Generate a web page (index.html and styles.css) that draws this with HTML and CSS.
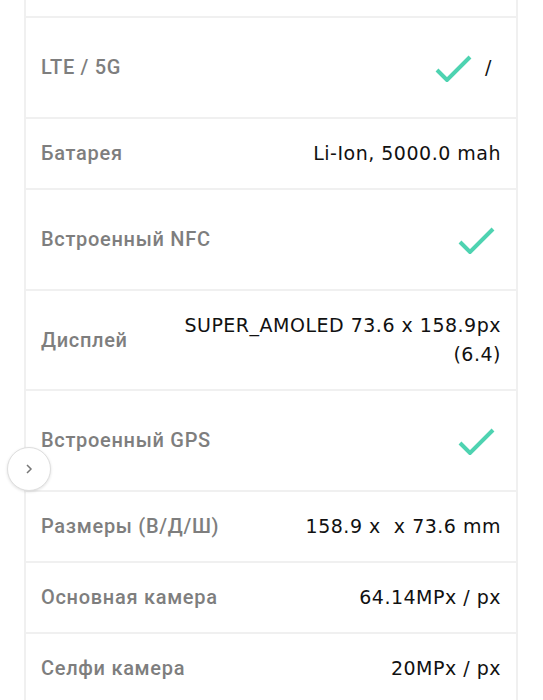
FILE: index.html
```html
<!DOCTYPE html>
<html lang="ru">

<head>
    <meta charset="UTF-8">
    <meta name="viewport" content="width=device-width, initial-scale=1.0">
    <title>Характеристики</title>
    <link rel="stylesheet" href="styles.css">
</head>

<body>

    <div class="specs">
        <div class="spec-row spec-row-cut"></div>

        <div class="spec-row spec-row-tall">
            <div class="spec-label">LTE / 5G</div>
            <div class="spec-value">
                <svg class="check" width="38" height="28" viewBox="0 0 38 28">
                    <path d="M3 16 L13 26 L36 3" />
                </svg>
                <span class="slash">/</span>
            </div>
        </div>

        <div class="spec-row">
            <div class="spec-label">Батарея</div>
            <div class="spec-value">Li-Ion, 5000.0 mah</div>
        </div>

        <div class="spec-row spec-row-tall">
            <div class="spec-label">Встроенный NFC</div>
            <div class="spec-value">
                <svg class="check check-alone" width="38" height="28" viewBox="0 0 38 28">
                    <path d="M3 16 L13 26 L36 3" />
                </svg>
            </div>
        </div>

        <div class="spec-row">
            <div class="spec-label">Дисплей</div>
            <div class="spec-value">SUPER_AMOLED 73.6 x 158.9px (6.4)</div>
        </div>

        <div class="spec-row spec-row-tall">
            <div class="spec-label">Встроенный GPS</div>
            <div class="spec-value">
                <svg class="check check-alone" width="38" height="28" viewBox="0 0 38 28">
                    <path d="M3 16 L13 26 L36 3" />
                </svg>
            </div>
        </div>

        <div class="spec-row">
            <div class="spec-label">Размеры (В/Д/Ш)</div>
            <div class="spec-value">158.9 x &nbsp;x 73.6 mm</div>
        </div>

        <div class="spec-row">
            <div class="spec-label">Основная камера</div>
            <div class="spec-value">64.14MPx / px</div>
        </div>

        <div class="spec-row">
            <div class="spec-label">Селфи камера</div>
            <div class="spec-value">20MPx / px</div>
        </div>

        <button class="side-toggle" type="button">
            <svg width="12" height="12" viewBox="0 0 12 12">
                <path d="M4 2 L8 6 L4 10" />
            </svg>
        </button>
    </div>

</body>

</html>
```

FILE: styles.css
```css
body {
    margin: 0;
    background-color: #fff;
    font-family: Roboto, "Noto Sans", sans-serif;
}

.specs {
    position: relative;
    margin: -53px 0 0 24px;
    width: 490px;
    border-left: 2px solid #f0f0f0;
    border-right: 2px solid #f0f0f0;
}

.spec-row {
    display: flex;
    align-items: center;
    justify-content: space-between;
    gap: 20px;
    padding: 20px 15px;
    min-height: 29px;
    border-bottom: 2px solid #f0f0f0;
    line-height: 29px;
}

.spec-row-cut {
    min-height: 29px;
}

.spec-row-tall {
    min-height: 59px;
}

.spec-display {
    min-height: 58px;
}

.spec-label {
    color: #7e7e7e;
    font-size: 20px;
    font-weight: 500;
    letter-spacing: 0.7px;
    white-space: nowrap;
}

.spec-value {
    display: flex;
    align-items: center;
    justify-content: flex-end;
    max-width: 326px;
    color: #111;
    font-family: "DejaVu Sans", Roboto, sans-serif;
    font-size: 19px;
    letter-spacing: 0.5px;
    text-align: right;
}

.check path {
    fill: none;
    stroke: #4ed3b1;
    stroke-width: 4;
}

.check-alone {
    margin-right: 6px;
}

.slash {
    margin-left: 13px;
    margin-right: 9px;
}

.side-toggle {
    position: absolute;
    left: -19px;
    top: 500px;
    width: 44px;
    height: 44px;
    padding: 0;
    display: flex;
    align-items: center;
    justify-content: center;
    background: #fff;
    border: 1px solid #dedede;
    border-radius: 50%;
    box-shadow: 0 1px 3px rgba(0, 0, 0, 0.12);
}

.side-toggle path {
    fill: none;
    stroke: #777;
    stroke-width: 1.5;
}
```
